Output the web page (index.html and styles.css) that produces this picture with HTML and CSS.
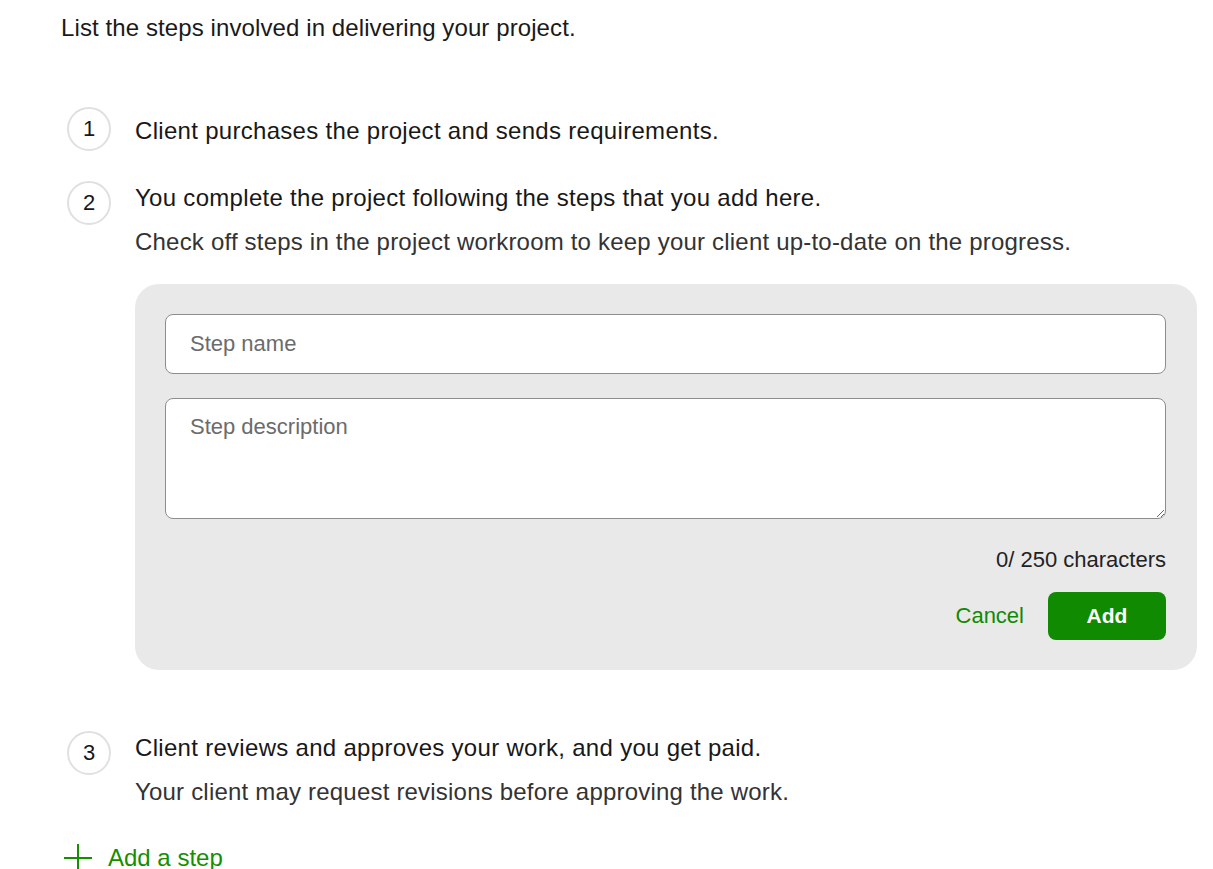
FILE: index.html
```html
<!DOCTYPE html>
<html lang="en">
<head>
<meta charset="utf-8">
<title>Project steps</title>
<link rel="stylesheet" href="styles.css">
</head>
<body>
<main class="page">
  <p class="intro">List the steps involved in delivering your project.</p>

  <ol class="steps">
    <li class="step step-single">
      <span class="num">1</span>
      <div class="step-body">
        <p class="step-title">Client purchases the project and sends requirements.</p>
      </div>
    </li>
    <li class="step">
      <span class="num">2</span>
      <div class="step-body">
        <p class="step-title">You complete the project following the steps that you add here.</p>
        <p class="step-desc">Check off steps in the project workroom to keep your client up-to-date on the progress.</p>
        <form class="panel">
          <input class="field" type="text" placeholder="Step name">
          <textarea class="field area" placeholder="Step description"></textarea>
          <div class="counter">0/ 250 characters</div>
          <div class="actions">
            <button type="button" class="btn-link">Cancel</button>
            <button type="button" class="btn-primary">Add</button>
          </div>
        </form>
      </div>
    </li>
    <li class="step step-last">
      <span class="num">3</span>
      <div class="step-body">
        <p class="step-title">Client reviews and approves your work, and you get paid.</p>
        <p class="step-desc">Your client may request revisions before approving the work.</p>
      </div>
    </li>
  </ol>

  <button type="button" class="add-step">
    <svg class="plus" width="30" height="30" viewBox="0 0 30 30" aria-hidden="true">
      <path d="M15 1v28M1 15h28" stroke="currentColor" stroke-width="2" fill="none"/>
    </svg>
    <span>Add a step</span>
  </button>
</main>
</body>
</html>
```

FILE: styles.css
```css
* { box-sizing: border-box; }

html, body {
  margin: 0;
  background: #ffffff;
}

body {
  font-family: "Liberation Sans", Arial, sans-serif;
  color: #181818;
}

.page {
  padding: 14px 16px 0 61px;
}

.intro {
  margin: 0;
  font-size: 24px;
  line-height: 28px;
  letter-spacing: 0.1px;
  color: #1a1a1a;
}

.steps {
  list-style: none;
  margin: 65px 0 0 0;
  padding: 0;
}

.step {
  display: flex;
  align-items: flex-start;
  margin-top: 30px;
}

.step:first-child { margin-top: 0; }

.step-single { align-items: center; }

.step-last { margin-top: 61px; }

.num {
  flex: 0 0 44px;
  width: 44px;
  height: 44px;
  margin-left: 6px;
  margin-right: 24px;
  border: 2px solid #e0e0e0;
  border-radius: 50%;
  display: flex;
  align-items: center;
  justify-content: center;
  font-size: 22px;
  color: #181818;
}

.step-body {
  flex: 1;
  min-width: 0;
  padding-top: 2px;
}

.step-single .step-body { padding-top: 4px; }

.step-title,
.step-desc {
  margin: 0;
  font-size: 24px;
  line-height: 30px;
  letter-spacing: 0.3px;
}

.step-desc {
  margin-top: 14px;
  color: #333333;
  letter-spacing: 0.2px;
}

.panel {
  margin-top: 27px;
  background: #e9e9e9;
  border-radius: 24px;
  padding: 30px 31px 30px 30px;
  display: flex;
  flex-direction: column;
}

.field {
  display: block;
  width: 100%;
  border: 1px solid #8d8d8d;
  border-radius: 8px;
  background: #ffffff;
  font-family: inherit;
  font-size: 22px;
  color: #181818;
  padding: 0 24px;
  height: 60px;
  outline: none;
}

.field::placeholder { color: #6b6b6b; }

.area {
  height: 121px;
  margin-top: 24px;
  padding: 15px 24px;
  resize: vertical;
}

.counter {
  margin-top: 29px;
  text-align: right;
  font-size: 22px;
  line-height: 24px;
  color: #222222;
}

.actions {
  margin-top: 20px;
  display: flex;
  justify-content: flex-end;
  align-items: center;
  gap: 24px;
}

.btn-link {
  background: none;
  border: 0;
  padding: 0;
  font-family: inherit;
  font-size: 22px;
  color: #108a00;
  cursor: pointer;
}

.btn-primary {
  width: 118px;
  height: 48px;
  border: 0;
  border-radius: 8px;
  background: #108a00;
  color: #ffffff;
  font-family: inherit;
  font-size: 21px;
  font-weight: bold;
  cursor: pointer;
}

.add-step {
  margin-top: 36px;
  margin-left: 2px;
  display: flex;
  align-items: center;
  gap: 15px;
  background: none;
  border: 0;
  padding: 0;
  font-family: inherit;
  font-size: 24px;
  color: #138f00;
  cursor: pointer;
}

.plus { display: block; }
```
